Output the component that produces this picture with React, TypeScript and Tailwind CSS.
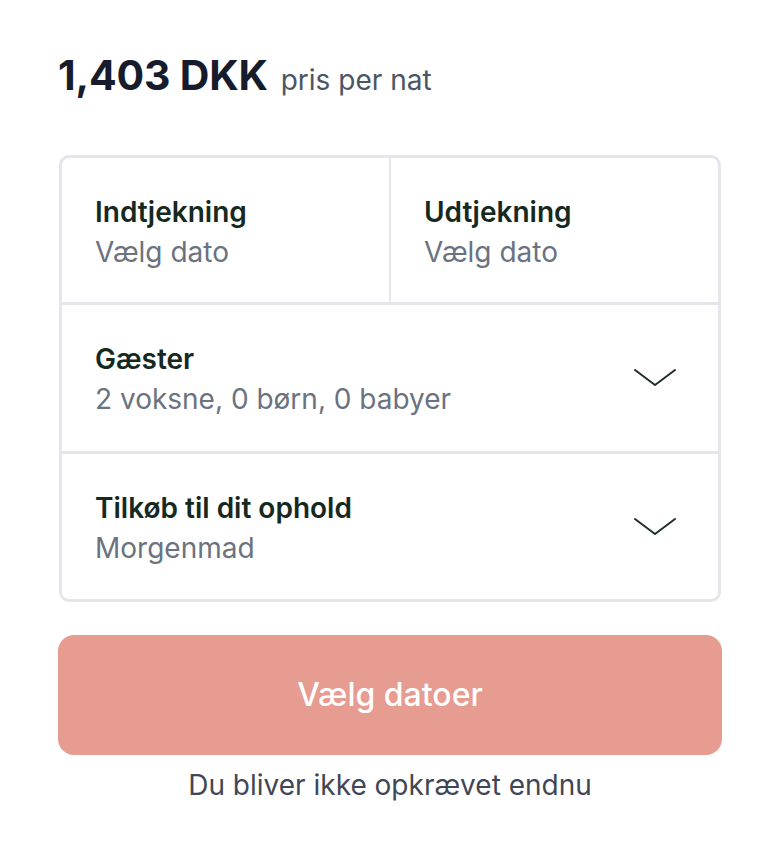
import React from "react";

function Chevron() {
  return (
    <svg width="42" height="20" viewBox="0 0 42 20" fill="none" className="shrink-0">
      <path d="M1 2 L21 17 L41 2" stroke="#1f2d27" strokeWidth="2" strokeLinecap="round" strokeLinejoin="round" />
    </svg>
  );
}

export default function App() {
  return (
    <div className="min-h-[844px] w-[780px] bg-white px-[58px] pt-[55px]" style={{ fontFamily: "Inter, 'Noto Sans', sans-serif" }}>
      <div className="flex items-baseline gap-[13px] leading-none">
        <span className="text-[41px] font-bold text-[#161c2b] tracking-[-0.2px]">1,403 DKK</span>
        <span className="text-[28px] text-[#4b5563]">pris per nat</span>
      </div>

      <div className="mt-[59px] mx-[1px] rounded-[10px] border-[3px] border-[#e5e6eb] overflow-hidden">
        <div className="flex h-[147px] border-b-[3px] border-[#e5e6eb]">
          <div className="flex-1 flex flex-col justify-center pl-[33px] pt-[4px] border-r-[2px] border-[#e5e6eb]">
            <div className="text-[28px] font-semibold text-[#16291f] leading-[40px]">Indtjekning</div>
            <div className="text-[28px] text-[#6b7280] leading-[40px]">Vælg dato</div>
          </div>
          <div className="flex-1 flex flex-col justify-center pl-[33px] pt-[4px]">
            <div className="text-[28px] font-semibold text-[#16291f] leading-[40px]">Udtjekning</div>
            <div className="text-[28px] text-[#6b7280] leading-[40px]">Vælg dato</div>
          </div>
        </div>
        <div className="flex h-[149px] items-center justify-between pl-[33px] pr-[42px] border-b-[3px] border-[#e5e6eb]">
          <div className="flex flex-col pt-[2px]">
            <div className="text-[28px] font-semibold text-[#16291f] leading-[40px]">Gæster</div>
            <div className="text-[28px] text-[#6b7280] leading-[40px]">2 voksne, 0 børn, 0 babyer</div>
          </div>
          <Chevron />
        </div>
        <div className="flex h-[145px] items-center justify-between pl-[33px] pr-[42px]">
          <div className="flex flex-col pt-[2px]">
            <div className="text-[28px] font-semibold text-[#16291f] leading-[40px]">Tilkøb til dit ophold</div>
            <div className="text-[28px] text-[#6b7280] leading-[40px]">Morgenmad</div>
          </div>
          <Chevron />
        </div>
      </div>

      <button className="mt-[33px] flex h-[120px] w-full items-center justify-center rounded-[16px] bg-[#e79c91] text-[32px] font-medium text-white">
        Vælg datoer
      </button>
      <div className="mt-[10px] text-center text-[28px] leading-[40px] text-[#3f4756]">Du bliver ikke opkrævet endnu</div>
    </div>
  );
}
